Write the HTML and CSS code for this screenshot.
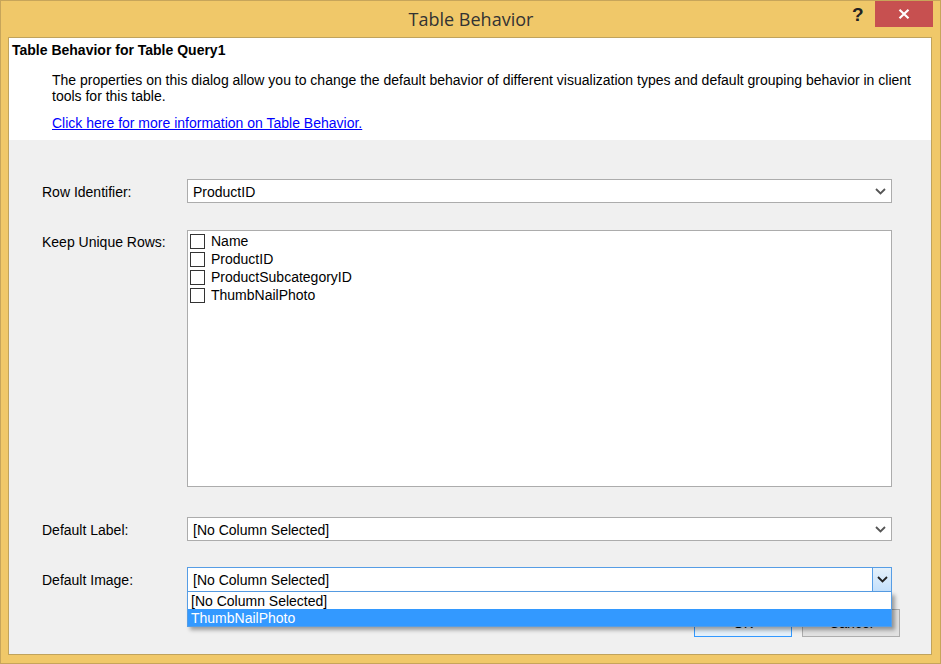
FILE: index.html
```html
<!DOCTYPE html>
<html>
<head>
<meta charset="utf-8">
<link rel="stylesheet" href="styles.css">
</head>
<body>
<div class="window">
  <div class="titlebar">
    <div class="title">Table Behavior</div>
    <div class="help">?</div>
    <div class="close">
      <svg width="12" height="10" viewBox="0 0 12 10"><path d="M1.5 0.8 L10.5 9.2 M10.5 0.8 L1.5 9.2" stroke="#fff" stroke-width="2.2" fill="none"/></svg>
    </div>
  </div>
  <div class="client">
    <div class="header">
      <div class="htitle">Table Behavior for Table Query1</div>
      <div class="desc">The properties on this dialog allow you to change the default behavior of different visualization types and default grouping behavior in client tools for this table.</div>
      <a class="link" href="#">Click here for more information on Table Behavior.</a>
    </div>
    <div class="body">
      <div class="row row-id">
        <div class="label">Row Identifier:</div>
        <div class="select">
          <span class="value">ProductID</span>
          <svg class="chev" width="11" height="7" viewBox="0 0 11 7"><path d="M1 1 L5.5 5.5 L10 1" stroke="#555" stroke-width="1.8" fill="none"/></svg>
        </div>
      </div>
      <div class="row row-keep">
        <div class="label">Keep Unique Rows:</div>
        <div class="listbox">
          <div class="item"><span class="cb"></span>Name</div>
          <div class="item"><span class="cb"></span>ProductID</div>
          <div class="item"><span class="cb"></span>ProductSubcategoryID</div>
          <div class="item"><span class="cb"></span>ThumbNailPhoto</div>
        </div>
      </div>
      <div class="row row-label">
        <div class="label">Default Label:</div>
        <div class="select">
          <span class="value">[No Column Selected]</span>
          <svg class="chev" width="11" height="7" viewBox="0 0 11 7"><path d="M1 1 L5.5 5.5 L10 1" stroke="#555" stroke-width="1.8" fill="none"/></svg>
        </div>
      </div>
      <div class="row row-image">
        <div class="label">Default Image:</div>
        <div class="select open">
          <span class="value">[No Column Selected]</span>
          <span class="dropbtn">
            <svg width="11" height="7" viewBox="0 0 11 7"><path d="M1 1 L5.5 5.5 L10 1" stroke="#222" stroke-width="1.8" fill="none"/></svg>
          </span>
          <div class="popup">
            <div class="opt">[No Column Selected]</div>
            <div class="opt sel">ThumbNailPhoto</div>
          </div>
        </div>
      </div>
      <div class="buttons">
        <div class="btn ok">OK</div>
        <div class="btn cancel">Cancel</div>
      </div>
    </div>
  </div>
</div>
</body>
</html>
```
FILE: styles.css
```css
html, body {
  margin: 0;
  padding: 0;
}
body {
  width: 941px;
  height: 664px;
  overflow: hidden;
  font-family: "Liberation Sans", Arial, sans-serif;
  font-size: 14px;
  color: #000;
}
.window {
  box-sizing: border-box;
  width: 941px;
  height: 664px;
  background: #f0c869;
  border: 1px solid #c7a55a;
  display: flex;
  flex-direction: column;
}
.titlebar {
  height: 36px;
  position: relative;
  display: flex;
  justify-content: center;
}
.title {
  font-family: "Open Sans", "Noto Sans", sans-serif;
  font-size: 18px;
  color: #333;
  line-height: 36px;
  margin-left: 1px;
}
.help {
  position: absolute;
  left: 851px;
  top: 3px;
  font-family: "Liberation Sans", Arial, sans-serif;
  font-weight: bold;
  font-size: 19px;
  color: #222;
}
.close {
  position: absolute;
  left: 874px;
  top: 0;
  width: 58px;
  height: 26px;
  background: #c75050;
  display: flex;
  align-items: center;
  justify-content: center;
}
.client {
  margin: 0 8px 8px 7px;
  flex: 1;
  border: 1px solid #c0a35c;
  background: #f0f0f0;
  display: flex;
  flex-direction: column;
}
.header {
  background: #fff;
  height: 102px;
  box-sizing: border-box;
  padding: 4px 3px 0 3px;
}
.htitle {
  font-weight: bold;
  font-size: 14px;
  line-height: 16px;
}
.desc {
  margin: 14px 0 0 40px;
  line-height: 16px;
}
.link {
  display: inline-block;
  margin: 11px 0 0 40px;
  color: #0000ff;
  line-height: 16px;
}
.body {
  flex: 1;
  position: relative;
  padding: 0 39px 0 33px;
}
.row {
  display: flex;
}
.label {
  width: 145px;
  height: 24px;
  line-height: 26px;
}
.select {
  flex: 1;
  height: 24px;
  box-sizing: border-box;
  background: #fff;
  border: 1px solid #acacac;
  position: relative;
  display: flex;
  align-items: center;
}
.value {
  padding-left: 5px;
  flex: 1;
  padding-top: 1px;
}
.chev {
  margin-right: 5px;
}
.row-id {
  margin-top: 39px;
}
.row-keep {
  margin-top: 27px;
}
.row-keep .label {
  line-height: 24px;
}
.listbox {
  flex: 1;
  height: 257px;
  box-sizing: border-box;
  background: #fff;
  border: 1px solid #acacac;
  padding: 1px 0 0 2px;
}
.item {
  display: flex;
  align-items: center;
  height: 18px;
}
.cb {
  display: inline-block;
  width: 13px;
  height: 13px;
  border: 1px solid #333;
  background: #fff;
  margin-right: 6px;
}
.row-label {
  margin-top: 30px;
}
.row-image {
  margin-top: 26px;
}
.select.open {
  border-color: #569de5;
  height: 25px;
}
.dropbtn {
  width: 18px;
  height: 23px;
  border-left: 1px solid #569de5;
  background: linear-gradient(#e5f1fb, #c4e0fc);
  display: flex;
  align-items: center;
  justify-content: center;
}
.popup {
  position: absolute;
  left: -1px;
  right: -1px;
  top: 24px;
  background: #fff;
  border: 1px solid #569de5;
  border-top: none;
  box-shadow: 3px 3px 4px rgba(0,0,0,0.35);
  z-index: 2;
}
.opt {
  height: 17px;
  line-height: 18px;
  padding-left: 3px;
}
.opt.sel {
  background: #3399ff;
  color: #fff;
}
.buttons {
  display: flex;
  justify-content: flex-end;
  gap: 10px;
  margin-top: 17px;
  margin-right: -8px;
}
.btn {
  width: 98px;
  height: 28px;
  box-sizing: border-box;
  background: #e1e1e1;
  border: 1px solid #adadad;
  text-align: center;
  line-height: 26px;
}
.btn.ok {
  border-color: #3399ff;
  background: #e5f1fb;
}
```
